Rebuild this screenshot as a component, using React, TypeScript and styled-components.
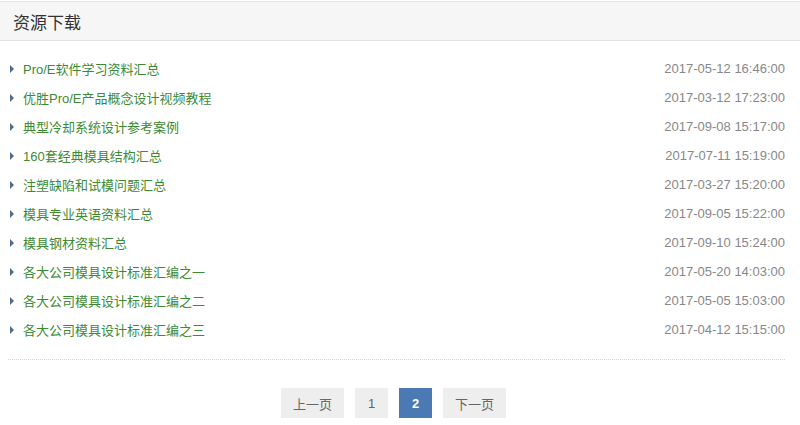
import React from "react";
import styled, { createGlobalStyle } from "styled-components";

const Global = createGlobalStyle`
  body {
    margin: 0;
    background: #fff;
    font-family: "Liberation Sans", Arial, "Noto Sans CJK SC", sans-serif;
  }
`;

const Page = styled.div`
  width: 800px;
  padding-top: 1px;
`;

const Header = styled.div`
  height: 38px;
  display: flex;
  align-items: center;
  padding: 0 13px;
  background-color: #f6f6f6;
  border-top: 1px solid #e6e6e6;
  border-bottom: 1px solid #e2e2e2;

  h2 {
    margin: 0;
    font-size: 17px;
    font-weight: 400;
    color: #333;
  }
`;

const List = styled.ul`
  list-style: none;
  margin: 0 15px 0 8px;
  padding: 13px 0 15px;
  border-bottom: 1px dotted #d8d8d8;
`;

const Row = styled.li`
  height: 29px;
  display: flex;
  align-items: center;
  justify-content: space-between;
  font-size: 13px;
`;

const Title = styled.a`
  display: flex;
  align-items: center;
  gap: 9px;
  color: #3d8a35;
  text-decoration: none;
  &::before {
    content: "";
    margin-left: 2px;
    border-style: solid;
    border-width: 4px 0 4px 4px;
    border-color: transparent transparent transparent #4d6b8c;
  }
`;

const Time = styled.span`
  color: #888;
`;

const Pager = styled.div`
  display: flex;
  justify-content: center;
  gap: 11px;
  padding-top: 28px;
  margin-left: -13px;
`;

const PageBtn = styled.a<{ $active?: boolean; $wide?: boolean }>`
  height: 30px;
  width: ${(p) => (p.$wide ? "63px" : "33px")};
  display: flex;
  align-items: center;
  justify-content: center;
  font-size: 13px;
  background-color: ${(p) => (p.$active ? "#4a79b3" : "#eeeeee")};
  color: ${(p) => (p.$active ? "#fff" : "#666")};
  font-weight: ${(p) => (p.$active ? 700 : 400)};
`;

const items: [string, string][] = [
  ["Pro/E软件学习资料汇总", "2017-05-12 16:46:00"],
  ["优胜Pro/E产品概念设计视频教程", "2017-03-12 17:23:00"],
  ["典型冷却系统设计参考案例", "2017-09-08 15:17:00"],
  ["160套经典模具结构汇总", "2017-07-11 15:19:00"],
  ["注塑缺陷和试模问题汇总", "2017-03-27 15:20:00"],
  ["模具专业英语资料汇总", "2017-09-05 15:22:00"],
  ["模具钢材资料汇总", "2017-09-10 15:24:00"],
  ["各大公司模具设计标准汇编之一", "2017-05-20 14:03:00"],
  ["各大公司模具设计标准汇编之二", "2017-05-05 15:03:00"],
  ["各大公司模具设计标准汇编之三", "2017-04-12 15:15:00"],
];

const App: React.FC = () => {
  return (
    <Page>
      <Global />
      <Header>
        <h2>资源下载</h2>
      </Header>
      <List>
        {items.map(([title, time]) => (
          <Row key={title}>
            <Title>{title}</Title>
            <Time>{time}</Time>
          </Row>
        ))}
      </List>
      <Pager>
        <PageBtn $wide>上一页</PageBtn>
        <PageBtn>1</PageBtn>
        <PageBtn $active>2</PageBtn>
        <PageBtn $wide>下一页</PageBtn>
      </Pager>
    </Page>
  );
};

export default App;
